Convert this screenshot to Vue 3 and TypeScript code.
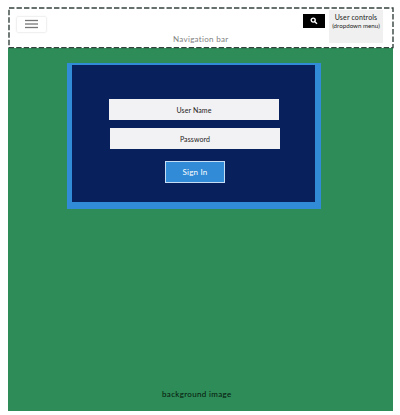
<script setup lang="ts">
import { ref } from 'vue'

interface Field {
  id: string
  label: string
}

const fields: Field[] = [
  { id: 'user', label: 'User Name' },
  { id: 'password', label: 'Password' },
]
const menuLines: number[] = [4.5, 8, 11.5]
const menuOpen = ref(false)
</script>

<template>
  <div class="page">
    <header class="navbar">
      <svg class="outline" width="386" height="42" aria-hidden="true">
        <rect x="1" y="1" width="384" height="39.6" />
      </svg>
      <button class="menu" type="button" @click="menuOpen = !menuOpen">
        <svg width="28" height="16" viewBox="0 0 28 16">
          <path v-for="y in menuLines" :key="y" :d="`M8 ${y}h13`" />
        </svg>
      </button>
      <span class="nav-title">Navigation bar</span>
      <button class="search" type="button">
        <svg width="8" height="8" viewBox="0 0 8 8">
          <circle cx="3.2" cy="3.1" r="2" />
          <path d="M4.8 4.7L7 6.8" />
        </svg>
      </button>
      <div class="controls">
        <span class="controls-title">User controls</span>
        <span class="controls-note">(dropdown menu)</span>
      </div>
    </header>
    <main class="backdrop">
      <form class="login" @submit.prevent>
        <div v-for="field in fields" :key="field.id" class="field" :class="field.id">
          <span>{{ field.label }}</span>
        </div>
        <button class="submit" type="submit"><span>Sign In</span></button>
      </form>
      <span class="caption">background image</span>
    </main>
  </div>
</template>

<style>
body {
  margin: 0;
  background: #fff;
}
</style>

<style scoped>
.page {
  box-sizing: border-box;
  width: 400px;
  height: 415px;
  padding: 7px 0 0 8px;
  overflow: hidden;
  background: #fff;
  font-family: Lato, "Open Sans", sans-serif;
}
button {
  box-sizing: border-box;
  border: 0;
  padding: 0;
  font-family: inherit;
}
span {
  white-space: nowrap;
}
svg {
  display: block;
}
.navbar {
  position: relative;
  z-index: 1;
  display: flex;
  align-items: flex-start;
  box-sizing: border-box;
  width: 386px;
  height: 41px;
  background: #fff;
}
.outline {
  position: absolute;
  top: 0;
  left: 0;
  pointer-events: none;
}
.outline rect {
  fill: none;
  stroke: #34423d;
  stroke-width: 1.4;
  stroke-dasharray: 5.4 2.1;
}
.menu {
  width: 29px;
  height: 15px;
  margin: 10px -1px 0 9px;
  background: #fff;
  border-radius: 1px;
  box-shadow: 0 0 2px #c4c4c4;
}
.menu svg {
  margin-top: -1px;
}
.menu path {
  stroke: #777;
  stroke-width: 1.3;
}
.nav-title {
  width: 57px;
  margin: 26px 0 0 128px;
  color: #808080;
  font-size: 8px;
  line-height: 12px;
  letter-spacing: 0.3px;
}
.search {
  display: flex;
  align-items: center;
  justify-content: center;
  width: 22px;
  height: 14px;
  margin: 7px 0 0 73px;
  background: #000;
}
.search svg {
  fill: none;
  stroke: #fff;
  stroke-width: 1.4;
}
.controls {
  display: flex;
  flex-direction: column;
  align-items: center;
  width: 54px;
  height: 33px;
  margin: 3px 0 0 4px;
  background: #f0f0f0;
  color: #1c1c1c;
}
.controls-title {
  margin-top: 2px;
  font-size: 7px;
  line-height: 10px;
  letter-spacing: 0.15px;
}
.controls-note {
  font-size: 6.2px;
  line-height: 8px;
}
.backdrop {
  display: flex;
  flex-direction: column;
  box-sizing: border-box;
  width: 385px;
  height: 363px;
  padding: 15px 0 0 59px;
  background: #2d8c57;
}
.login {
  display: flex;
  flex-direction: column;
  box-sizing: border-box;
  width: 254px;
  height: 146px;
  border: solid #318bd7;
  border-width: 2px 6px 7px 5px;
  padding: 34px 0 0 37px;
  background: #08215d;
}
.field {
  display: flex;
  align-items: center;
  justify-content: center;
  width: 170px;
  height: 21px;
  background: #f2f1f3;
  color: #222;
  font-size: 7px;
  letter-spacing: 0.1px;
}
.password {
  margin: 8px 0 0 1px;
}
.submit {
  width: 60px;
  height: 22px;
  margin: 12px 0 0 56px;
  border: 1px solid #c5def4;
  background: #318bd7;
  color: #fff;
  font-size: 8px;
  letter-spacing: 0.2px;
}
.caption {
  margin: 179px 0 0 95px;
  color: #06150c;
  font-size: 8px;
  line-height: 12px;
  letter-spacing: 0.35px;
}
</style>
